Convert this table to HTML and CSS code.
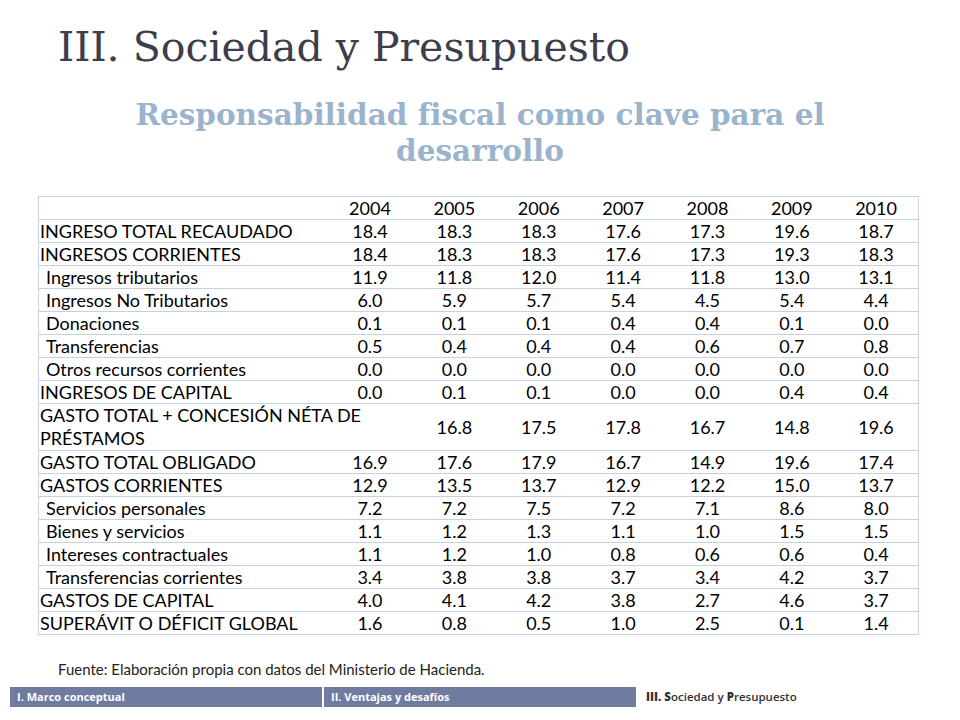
FILE: index.html
```html
<!DOCTYPE html>
<html lang="es">
<head>
<meta charset="utf-8">
<title>III. Sociedad y Presupuesto</title>
<link rel="stylesheet" href="styles.css">
</head>
<body>
<div class="slide">
  <h1 class="title">III. Sociedad y Presupuesto</h1>
  <h2 class="subtitle">Responsabilidad fiscal como clave para el<br>desarrollo</h2>
  <table class="data">
    <colgroup>
      <col class="c-label"><col class="c-num"><col class="c-num"><col class="c-num"><col class="c-num"><col class="c-num"><col class="c-num"><col class="c-num">
    </colgroup>
    <tr><td></td><td>2004</td><td>2005</td><td>2006</td><td>2007</td><td>2008</td><td>2009</td><td>2010</td></tr>
    <tr><td class="lbl">INGRESO TOTAL RECAUDADO</td><td>18.4</td><td>18.3</td><td>18.3</td><td>17.6</td><td>17.3</td><td>19.6</td><td>18.7</td></tr>
    <tr><td class="lbl">INGRESOS CORRIENTES</td><td>18.4</td><td>18.3</td><td>18.3</td><td>17.6</td><td>17.3</td><td>19.3</td><td>18.3</td></tr>
    <tr><td class="lbl sub">Ingresos tributarios</td><td>11.9</td><td>11.8</td><td>12.0</td><td>11.4</td><td>11.8</td><td>13.0</td><td>13.1</td></tr>
    <tr><td class="lbl sub">Ingresos No Tributarios</td><td>6.0</td><td>5.9</td><td>5.7</td><td>5.4</td><td>4.5</td><td>5.4</td><td>4.4</td></tr>
    <tr><td class="lbl sub">Donaciones</td><td>0.1</td><td>0.1</td><td>0.1</td><td>0.4</td><td>0.4</td><td>0.1</td><td>0.0</td></tr>
    <tr><td class="lbl sub">Transferencias</td><td>0.5</td><td>0.4</td><td>0.4</td><td>0.4</td><td>0.6</td><td>0.7</td><td>0.8</td></tr>
    <tr><td class="lbl sub">Otros recursos corrientes</td><td>0.0</td><td>0.0</td><td>0.0</td><td>0.0</td><td>0.0</td><td>0.0</td><td>0.0</td></tr>
    <tr><td class="lbl">INGRESOS DE CAPITAL</td><td>0.0</td><td>0.1</td><td>0.1</td><td>0.0</td><td>0.0</td><td>0.4</td><td>0.4</td></tr>
    <tr class="tall"><td class="lbl wrap" colspan="2">GASTO TOTAL + CONCESIÓN NÉTA DE PRÉSTAMOS</td><td>16.8</td><td>17.5</td><td>17.8</td><td>16.7</td><td>14.8</td><td>19.6</td></tr>
    <tr><td class="lbl">GASTO TOTAL OBLIGADO</td><td>16.9</td><td>17.6</td><td>17.9</td><td>16.7</td><td>14.9</td><td>19.6</td><td>17.4</td></tr>
    <tr><td class="lbl">GASTOS CORRIENTES</td><td>12.9</td><td>13.5</td><td>13.7</td><td>12.9</td><td>12.2</td><td>15.0</td><td>13.7</td></tr>
    <tr><td class="lbl sub">Servicios personales</td><td>7.2</td><td>7.2</td><td>7.5</td><td>7.2</td><td>7.1</td><td>8.6</td><td>8.0</td></tr>
    <tr><td class="lbl sub">Bienes y servicios</td><td>1.1</td><td>1.2</td><td>1.3</td><td>1.1</td><td>1.0</td><td>1.5</td><td>1.5</td></tr>
    <tr><td class="lbl sub">Intereses contractuales</td><td>1.1</td><td>1.2</td><td>1.0</td><td>0.8</td><td>0.6</td><td>0.6</td><td>0.4</td></tr>
    <tr><td class="lbl sub">Transferencias corrientes</td><td>3.4</td><td>3.8</td><td>3.8</td><td>3.7</td><td>3.4</td><td>4.2</td><td>3.7</td></tr>
    <tr><td class="lbl">GASTOS DE CAPITAL</td><td>4.0</td><td>4.1</td><td>4.2</td><td>3.8</td><td>2.7</td><td>4.6</td><td>3.7</td></tr>
    <tr><td class="lbl">SUPERÁVIT O DÉFICIT GLOBAL</td><td>1.6</td><td>0.8</td><td>0.5</td><td>1.0</td><td>2.5</td><td>0.1</td><td>1.4</td></tr>
  </table>
  <p class="source">Fuente: Elaboración propia con datos del Ministerio de Hacienda.</p>
  <nav class="footer">
    <div class="tab">I. Marco conceptual</div>
    <div class="tab">II. Ventajas y desafíos</div>
    <div class="tab current"><b>III. S</b>ociedad y <b>P</b>resupuesto</div>
  </nav>
</div>
</body>
</html>
```

FILE: styles.css
```css
html, body {
  margin: 0;
  padding: 0;
  background: #ffffff;
}

.slide {
  width: 960px;
  height: 720px;
  box-sizing: border-box;
  padding-top: 23px;
  display: flex;
  flex-direction: column;
}

.title {
  margin: 0 0 0 58px;
  font-family: "DejaVu Serif", "Liberation Serif", serif;
  font-weight: normal;
  font-size: 41px;
  line-height: 48px;
  color: #3d3d4b;
}

.subtitle {
  margin: 26px 0 0 0;
  text-align: center;
  font-family: "DejaVu Serif", "Liberation Serif", serif;
  font-weight: bold;
  font-size: 29.5px;
  line-height: 36px;
  color: #9bb4cc;
}

.data {
  margin: 27px 0 0 38px;
  width: 881px;
  border-collapse: collapse;
  table-layout: fixed;
  font-family: "Lato", "Open Sans", sans-serif;
  font-size: 18px;
  color: #000;
  border-left: 1px solid #c9d4e0;
  border-right: 1px solid #c9d4e0;
}

.c-label { width: 288px; }
.c-num { width: 84px; }

.data td {
  height: 22px;
  padding: 0;
  text-align: center;
  vertical-align: middle;
  border-top: 1px solid #c6d1de;
  border-bottom: 1px solid #c6d1de;
  line-height: 22px;
  white-space: nowrap;
}

.data td.lbl {
  text-align: left;
  padding-left: 1px;
}

.data td.sub {
  padding-left: 7px;
}

.data td.wrap {
  white-space: normal;
  line-height: 23px;
  padding-right: 4px;
}

.source {
  margin: 26px 0 0 58px;
  font-family: "Lato", "Open Sans", sans-serif;
  font-size: 15px;
  line-height: 16px;
  color: #222;
}

.footer {
  display: flex;
  margin: auto 0 13px 10px;
  height: 20px;
}

.tab {
  width: 312px;
  background: #6f7ba0;
  color: #ffffff;
  font-family: "Open Sans", "Lato", sans-serif;
  font-weight: bold;
  font-size: 11px;
  line-height: 20px;
  padding-left: 7px;
  box-sizing: border-box;
  margin-right: 2px;
}

.tab.current {
  background: transparent;
  color: #333;
  font-weight: 600;
  font-size: 11.5px;
  padding-left: 8px;
  width: auto;
}

.tab.current b {
  font-weight: 800;
}
```
